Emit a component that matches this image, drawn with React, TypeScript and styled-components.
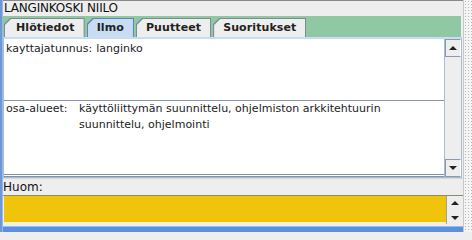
import * as React from "react"
import styled, { createGlobalStyle } from "styled-components"

const GlobalStyle = createGlobalStyle`
  html, body {
    margin: 0;
    padding: 0;
    background: #eeeeee;
  }
  body {
    font-family: "DejaVu Sans", "Liberation Sans", sans-serif;
    font-size: 11px;
    color: #222;
  }
`

const tabs = ["Hlötiedot", "Ilmo", "Puutteet", "Suoritukset"]

const App: React.FunctionComponent = () => {
  return (
    <>
      <GlobalStyle />
      <Frame>
        <LeftEdge />
        <Main>
          <TitleBar>LANGINKOSKI NIILO</TitleBar>
          <TabStrip>
            {tabs.map((t, i) => (
              <Tab key={t} selected={i === 1}>
                <TabFace selected={i === 1} first={i === 0}>{t}</TabFace>
              </Tab>
            ))}
          </TabStrip>
          <Panel>
            <Rows>
              <Row height={59} labelWidth="max-content" gap={4}>
                <Label>kayttajatunnus:</Label>
                <Value>langinko</Value>
              </Row>
              <Row height={70} labelWidth="69px" gap={4} divider>
                <Label>osa-alueet:</Label>
                <Value>
                  käyttöliittymän suunnittelu, ohjelmiston arkkitehtuurin
                  suunnittelu, ohjelmointi
                </Value>
              </Row>
            </Rows>
            <ScrollBar>
              <ArrowButton>
                <Arrow up />
              </ArrowButton>
              <Track />
              <ArrowButton>
                <Arrow />
              </ArrowButton>
            </ScrollBar>
          </Panel>
          <NoteLabel>Huom:</NoteLabel>
          <NoteBox>
            <NoteArea />
            <SmallScroll>
              <SmallButton>
                <Arrow up />
              </SmallButton>
              <SmallButton>
                <Arrow />
              </SmallButton>
            </SmallScroll>
          </NoteBox>
          <BottomBar />
        </Main>
        <RightEdge />
      </Frame>
    </>
  )
}

const Frame = styled.div`
  display: flex;
  width: 472px;
  height: 232px;
  overflow: hidden;
  background: #eeeeee;
`

const LeftEdge = styled.div`
  width: 2px;
  background: #6c98d8;
  border-right: 1px solid #9ab8e4;
`

const RightEdge = styled.div`
  width: 8px;
  border-left: 1px solid #c8c8c8;
  background-color: #f4f4f4;
  background-image: radial-gradient(#b8b8b8 0.7px, transparent 0.8px);
  background-size: 3px 3px;
`

const Main = styled.div`
  flex: 1;
  display: flex;
  flex-direction: column;
  border-top: 1px solid #8a8a8a;
`

const TitleBar = styled.div`
  height: 15px;
  line-height: 15px;
  padding-left: 1px;
  font-size: 12px;
  letter-spacing: -0.2px;
  color: #111;
  background: #eeeeee;
`

const TabStrip = styled.div`
  height: 21px;
  display: flex;
  align-items: flex-end;
  gap: 2px;
  padding-left: 1px;
  background: #8fc8a3;
  border-right: 2px solid #eeeeee;
`

const tabShape = "polygon(6px 0, 100% 0, 100% 100%, 0 100%, 0 6px)"

const Tab = styled.div<{ selected?: boolean }>`
  height: 18px;
  padding: 1px 1px 0 1px;
  background: ${p => (p.selected ? "#6384b4" : "#7e8a96")};
  clip-path: ${tabShape};
`

const TabFace = styled.div<{ selected?: boolean; first?: boolean }>`
  height: 18px;
  line-height: 18px;
  padding: 0 9px 0 ${p => (p.first ? 11 : 9)}px;
  font-weight: bold;
  font-size: 11px;
  letter-spacing: 0.1px;
  color: #222;
  background: ${p => (p.selected ? "#c8dcf2" : "#eeeeee")};
  clip-path: ${tabShape};
`

const Panel = styled.div`
  height: 138px;
  display: flex;
  margin-right: 1px;
  border: 1px solid #a9bdd2;
  border-top: 2px solid #c8dcf2;
  background: #fff;
`

const Rows = styled.div`
  flex: 1;
  display: flex;
  flex-direction: column;
  padding-top: 2px;
  border-bottom: 3px double #8292a4;
`

const Row = styled.div<{ height: number; labelWidth: string; gap: number; divider?: boolean }>`
  display: grid;
  grid-template-columns: ${p => p.labelWidth} 1fr;
  column-gap: ${p => p.gap}px;
  align-content: start;
  height: ${p => p.height}px;
  padding: 0 2px;
  line-height: 16px;
  color: #222;
  border-top: ${p => (p.divider ? "1px solid #8898aa" : "none")};
`

const Label = styled.span``

const Value = styled.span``

const ScrollBar = styled.div`
  width: 16px;
  display: flex;
  flex-direction: column;
  background: #eeeeee;
  border-left: 1px solid #a9bdd2;
`

const ArrowButton = styled.div`
  height: 16px;
  display: flex;
  align-items: center;
  justify-content: center;
  background: #eeeeee;
  border: 1px solid #8a9aaa;
  border-right-color: #fff;
`

const Track = styled.div`
  flex: 1;
  background: #eeeeee;
`

const Arrow = styled.div<{ up?: boolean }>`
  width: 0;
  height: 0;
  border-left: 4px solid transparent;
  border-right: 4px solid transparent;
  ${p =>
    p.up
      ? "border-bottom: 4px solid #222;"
      : "border-top: 4px solid #222;"}
`

const NoteLabel = styled.div`
  height: 16px;
  line-height: 17px;
  font-size: 12px;
  color: #111;
  border-top: 1px solid #d8d8d8;
`

const NoteBox = styled.div`
  height: 28px;
  display: flex;
  border-top: 1px solid #8a8a70;
`

const NoteArea = styled.div`
  flex: 1;
  margin-left: 1px;
  background: #f0c40a;
  border-bottom: 2px solid #f8f0d0;
`

const SmallScroll = styled.div`
  width: 15px;
  display: flex;
  flex-direction: column;
  justify-content: space-between;
  background: #eeeeee;
  border-left: 1px solid #a0a0a0;
  margin-right: 1px;
`

const SmallButton = styled.div`
  height: 13px;
  display: flex;
  align-items: center;
  justify-content: center;
`

const BottomBar = styled.div`
  flex: 1;
  margin-top: 2px;
  background: #5a90dc;
  border-top: 1px solid #9cbce8;
`

export default App
